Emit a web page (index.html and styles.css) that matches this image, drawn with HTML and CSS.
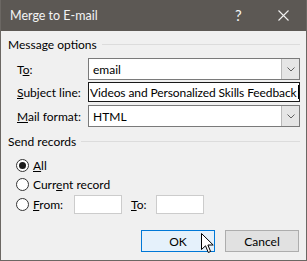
FILE: index.html
```html
<!DOCTYPE html>
<html>
<head>
<meta charset="utf-8">
<link rel="stylesheet" href="styles.css">
</head>
<body>
<div class="window">
  <div class="titlebar">
    <span class="title">Merge to E-mail</span>
    <span class="help">?</span>
    <svg class="close" width="11" height="11" viewBox="0 0 11 11"><path d="M0.5 0.5 L10.5 10.5 M10.5 0.5 L0.5 10.5" stroke="#f2f2f2" stroke-width="1.1" fill="none"/></svg>
  </div>
  <div class="content">
    <div class="group-head"><span>Message options</span><div class="rule"></div></div>
    <div class="row r-to">
      <label class="lbl">T<u>o</u>:</label>
      <div class="combo"><span class="val">email</span><div class="drop"><svg width="8" height="5" viewBox="0 0 8 5"><path d="M0.5 0.5 L4 4 L7.5 0.5" stroke="#606060" fill="none"/></svg></div></div>
    </div>
    <div class="row r-subj">
      <label class="lbl"><u>S</u>ubject line:</label>
      <div class="textbox focus"><span class="val">Videos and Personalized Skills Feedback</span><span class="caret"></span></div>
    </div>
    <div class="row r-mail">
      <label class="lbl"><u>M</u>ail format:</label>
      <div class="combo"><span class="val">HTML</span><div class="drop"><svg width="8" height="5" viewBox="0 0 8 5"><path d="M0.5 0.5 L4 4 L7.5 0.5" stroke="#606060" fill="none"/></svg></div></div>
    </div>
    <div class="group-head g2"><span>Send records</span><div class="rule"></div></div>
    <div class="radio r-all"><span class="dot checked"></span><span><u>A</u>ll</span></div>
    <div class="radio r-cur"><span class="dot"></span><span>Curr<u>e</u>nt record</span></div>
    <div class="radio r-from"><span class="dot"></span><span class="from-lbl"><u>F</u>rom:</span><div class="small-box"></div><span class="to-lbl"><u>T</u>o:</span><div class="small-box"></div></div>
    <div class="buttons">
      <div class="btn ok">OK
        <svg class="cursor" width="14" height="21" viewBox="0 0 14 21"><path d="M0.5 0.5 L0.5 16.5 L4.5 12.8 L7.3 19.5 L9.6 18.5 L6.9 12 L12.2 12 Z" fill="#fff" stroke="#000" stroke-width="1" stroke-linejoin="miter"/></svg>
      </div>
      <div class="btn cancel">Cancel</div>
    </div>
  </div>
</div>
</body>
</html>
```
FILE: styles.css
```css
html, body {
  margin: 0;
  padding: 0;
  background: #f0f0f0;
}
body {
  font-family: Lato, "Noto Sans", sans-serif;
  font-size: 12px;
  color: #000;
}
.window {
  width: 307px;
  height: 261px;
  box-sizing: border-box;
  border: 1px solid #6b6763;
  border-top: none;
  background: #f0f0f0;
  display: flex;
  flex-direction: column;
}
.titlebar {
  height: 31px;
  background: #5c5854;
  color: #f4f4f4;
  display: flex;
  align-items: center;
  padding-left: 9px;
  box-sizing: border-box;
  flex: none;
}
.title {
  flex: 1;
  font-size: 12.5px;
  padding-bottom: 1px;
}
.help {
  font-size: 15px;
  width: 12px;
  margin-right: 31px;
  padding-bottom: 2px;
}
.close {
  margin-right: 17px;
}
.content {
  padding: 6px 6px 0 7px;
  display: flex;
  flex-direction: column;
  flex: 1;
}
.group-head {
  display: flex;
  align-items: center;
  height: 16px;
  line-height: 16px;
  white-space: nowrap;
}
.group-head .rule {
  flex: 1;
  height: 1px;
  background: #dcdcdc;
  margin-left: 5px;
  margin-top: -1px;
}
.g2 {
  margin-top: 7px;
}
.row {
  display: flex;
  align-items: center;
  padding-left: 9px;
}
.lbl {
  width: 71px;
  flex: none;
  white-space: nowrap;
}
.r-to { margin-top: 5px; height: 22px; }
.r-subj { margin-top: 2px; height: 20px; }
.r-mail { margin-top: 3px; height: 22px; }
.combo, .textbox {
  flex: 1;
  min-width: 0;
  height: 100%;
  box-sizing: border-box;
  border: 1px solid #7a7a7a;
  background: #fff;
  display: flex;
  align-items: center;
  overflow: hidden;
}
.combo .val {
  flex: 1;
  padding-left: 4px;
}
.drop {
  width: 17px;
  height: 100%;
  background: #e5e5e5;
  border-left: 1px solid #b9b9b9;
  display: flex;
  align-items: center;
  justify-content: center;
  flex: none;
}
.textbox.focus {
  border-color: #1a1a1a;
  white-space: nowrap;
}
.textbox .val {
  flex: none;
  padding-left: 1px;
  letter-spacing: -0.1px;
}
.caret {
  width: 1px;
  height: 14px;
  background: #000;
  margin-left: 1px;
  flex: none;
}
.radio {
  display: flex;
  align-items: center;
  padding-left: 8px;
  white-space: nowrap;
}
.r-all { margin-top: 7px; height: 16px; }
.r-cur { margin-top: 3px; height: 16px; }
.r-from { margin-top: 3px; height: 19px; }
.dot {
  width: 13px;
  height: 13px;
  box-sizing: border-box;
  border: 1px solid #333;
  border-radius: 50%;
  background: #fff;
  margin-right: 4px;
  flex: none;
  display: flex;
  align-items: center;
  justify-content: center;
}
.dot.checked::after {
  content: "";
  width: 7px;
  height: 7px;
  border-radius: 50%;
  background: #1a1a1a;
}
.from-lbl {
  width: 41px;
}
.small-box {
  width: 48px;
  height: 19px;
  box-sizing: border-box;
  border: 1px solid #cccccc;
  background: #fff;
}
.to-lbl {
  margin-left: 9px;
  width: 25px;
}
.buttons {
  display: flex;
  justify-content: flex-end;
  gap: 10px;
  margin-top: 16px;
  margin-right: 1px;
}
.btn {
  width: 74px;
  height: 22px;
  box-sizing: border-box;
  display: flex;
  align-items: center;
  justify-content: center;
  position: relative;
}
.ok {
  border: 1px solid #0078d7;
  background: #e5f1fb;
}
.cancel {
  border: 1px solid #adadad;
  background: #e1e1e1;
}
.cursor {
  position: absolute;
  left: 59px;
  top: 2px;
}
```
